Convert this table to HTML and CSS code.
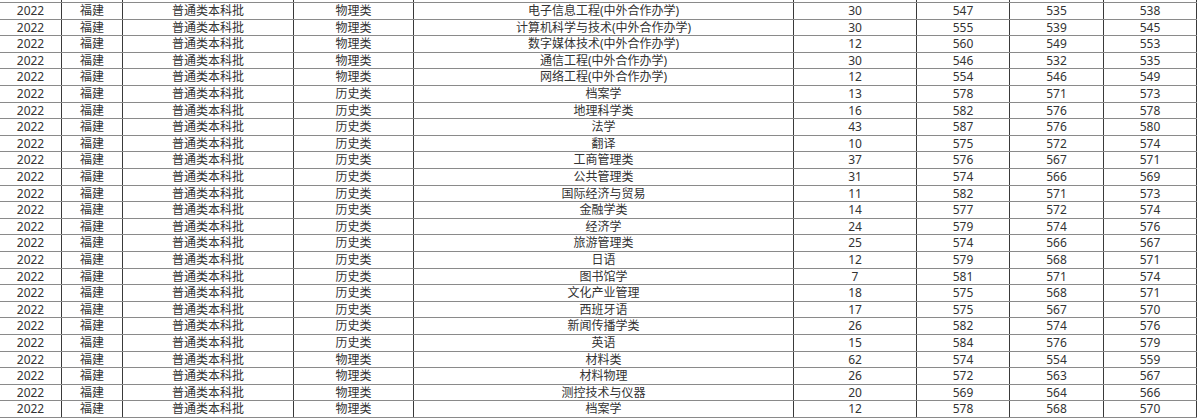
FILE: index.html
```html
<!DOCTYPE html>
<html lang="zh-CN">
<head>
<meta charset="utf-8">
<title>录取分数</title>
<link rel="stylesheet" href="styles.css">
</head>
<body>
<div class="sheet">
  <div class="row cut"><span></span><span></span><span></span><span></span><span></span><span></span><span></span><span></span><span></span></div>
  <div class="row"><span>2022</span><span>福建</span><span>普通类本科批</span><span>物理类</span><span>电子信息工程(中外合作办学)</span><span>30</span><span>547</span><span>535</span><span>538</span></div>
  <div class="row"><span>2022</span><span>福建</span><span>普通类本科批</span><span>物理类</span><span>计算机科学与技术(中外合作办学)</span><span>30</span><span>555</span><span>539</span><span>545</span></div>
  <div class="row"><span>2022</span><span>福建</span><span>普通类本科批</span><span>物理类</span><span>数字媒体技术(中外合作办学)</span><span>12</span><span>560</span><span>549</span><span>553</span></div>
  <div class="row"><span>2022</span><span>福建</span><span>普通类本科批</span><span>物理类</span><span>通信工程(中外合作办学)</span><span>30</span><span>546</span><span>532</span><span>535</span></div>
  <div class="row"><span>2022</span><span>福建</span><span>普通类本科批</span><span>物理类</span><span>网络工程(中外合作办学)</span><span>12</span><span>554</span><span>546</span><span>549</span></div>
  <div class="row"><span>2022</span><span>福建</span><span>普通类本科批</span><span>历史类</span><span>档案学</span><span>13</span><span>578</span><span>571</span><span>573</span></div>
  <div class="row"><span>2022</span><span>福建</span><span>普通类本科批</span><span>历史类</span><span>地理科学类</span><span>16</span><span>582</span><span>576</span><span>578</span></div>
  <div class="row"><span>2022</span><span>福建</span><span>普通类本科批</span><span>历史类</span><span>法学</span><span>43</span><span>587</span><span>576</span><span>580</span></div>
  <div class="row"><span>2022</span><span>福建</span><span>普通类本科批</span><span>历史类</span><span>翻译</span><span>10</span><span>575</span><span>572</span><span>574</span></div>
  <div class="row"><span>2022</span><span>福建</span><span>普通类本科批</span><span>历史类</span><span>工商管理类</span><span>37</span><span>576</span><span>567</span><span>571</span></div>
  <div class="row"><span>2022</span><span>福建</span><span>普通类本科批</span><span>历史类</span><span>公共管理类</span><span>31</span><span>574</span><span>566</span><span>569</span></div>
  <div class="row"><span>2022</span><span>福建</span><span>普通类本科批</span><span>历史类</span><span>国际经济与贸易</span><span>11</span><span>582</span><span>571</span><span>573</span></div>
  <div class="row"><span>2022</span><span>福建</span><span>普通类本科批</span><span>历史类</span><span>金融学类</span><span>14</span><span>577</span><span>572</span><span>574</span></div>
  <div class="row"><span>2022</span><span>福建</span><span>普通类本科批</span><span>历史类</span><span>经济学</span><span>24</span><span>579</span><span>574</span><span>576</span></div>
  <div class="row"><span>2022</span><span>福建</span><span>普通类本科批</span><span>历史类</span><span>旅游管理类</span><span>25</span><span>574</span><span>566</span><span>567</span></div>
  <div class="row"><span>2022</span><span>福建</span><span>普通类本科批</span><span>历史类</span><span>日语</span><span>12</span><span>579</span><span>568</span><span>571</span></div>
  <div class="row"><span>2022</span><span>福建</span><span>普通类本科批</span><span>历史类</span><span>图书馆学</span><span>7</span><span>581</span><span>571</span><span>574</span></div>
  <div class="row"><span>2022</span><span>福建</span><span>普通类本科批</span><span>历史类</span><span>文化产业管理</span><span>18</span><span>575</span><span>568</span><span>571</span></div>
  <div class="row"><span>2022</span><span>福建</span><span>普通类本科批</span><span>历史类</span><span>西班牙语</span><span>17</span><span>575</span><span>567</span><span>570</span></div>
  <div class="row"><span>2022</span><span>福建</span><span>普通类本科批</span><span>历史类</span><span>新闻传播学类</span><span>26</span><span>582</span><span>574</span><span>576</span></div>
  <div class="row"><span>2022</span><span>福建</span><span>普通类本科批</span><span>历史类</span><span>英语</span><span>15</span><span>584</span><span>576</span><span>579</span></div>
  <div class="row"><span>2022</span><span>福建</span><span>普通类本科批</span><span>物理类</span><span>材料类</span><span>62</span><span>574</span><span>554</span><span>559</span></div>
  <div class="row"><span>2022</span><span>福建</span><span>普通类本科批</span><span>物理类</span><span>材料物理</span><span>26</span><span>572</span><span>563</span><span>567</span></div>
  <div class="row"><span>2022</span><span>福建</span><span>普通类本科批</span><span>物理类</span><span>测控技术与仪器</span><span>20</span><span>569</span><span>564</span><span>566</span></div>
  <div class="row"><span>2022</span><span>福建</span><span>普通类本科批</span><span>物理类</span><span>档案学</span><span>12</span><span>578</span><span>568</span><span>570</span></div>
</div>
</body>
</html>
```

FILE: styles.css
```css
html, body {
  margin: 0;
  padding: 0;
  background: #ffffff;
}

body {
  overflow: hidden;
  font-family: "Noto Sans", "Noto Sans CJK SC", sans-serif;
  font-size: 12px;
  color: #333333;
}

.sheet {
  width: 1197px;
}

.row {
  display: grid;
  grid-template-columns: 62px 61px 171px 120px 380px 123px 93px 94px 93px;
  box-sizing: border-box;
  height: 17px;
  border-bottom: 1px solid #8a8a8a;
}

.row.cut {
  height: 3px;
}

.sheet .row:nth-child(5n+3),
.sheet .row:nth-child(5n+5) {
  height: 16px;
}

.row span {
  box-sizing: border-box;
  border-right: 1px solid #3a3a3a;
  display: flex;
  align-items: center;
  justify-content: center;
  white-space: nowrap;
  line-height: 1;
  overflow: hidden;
}
```
